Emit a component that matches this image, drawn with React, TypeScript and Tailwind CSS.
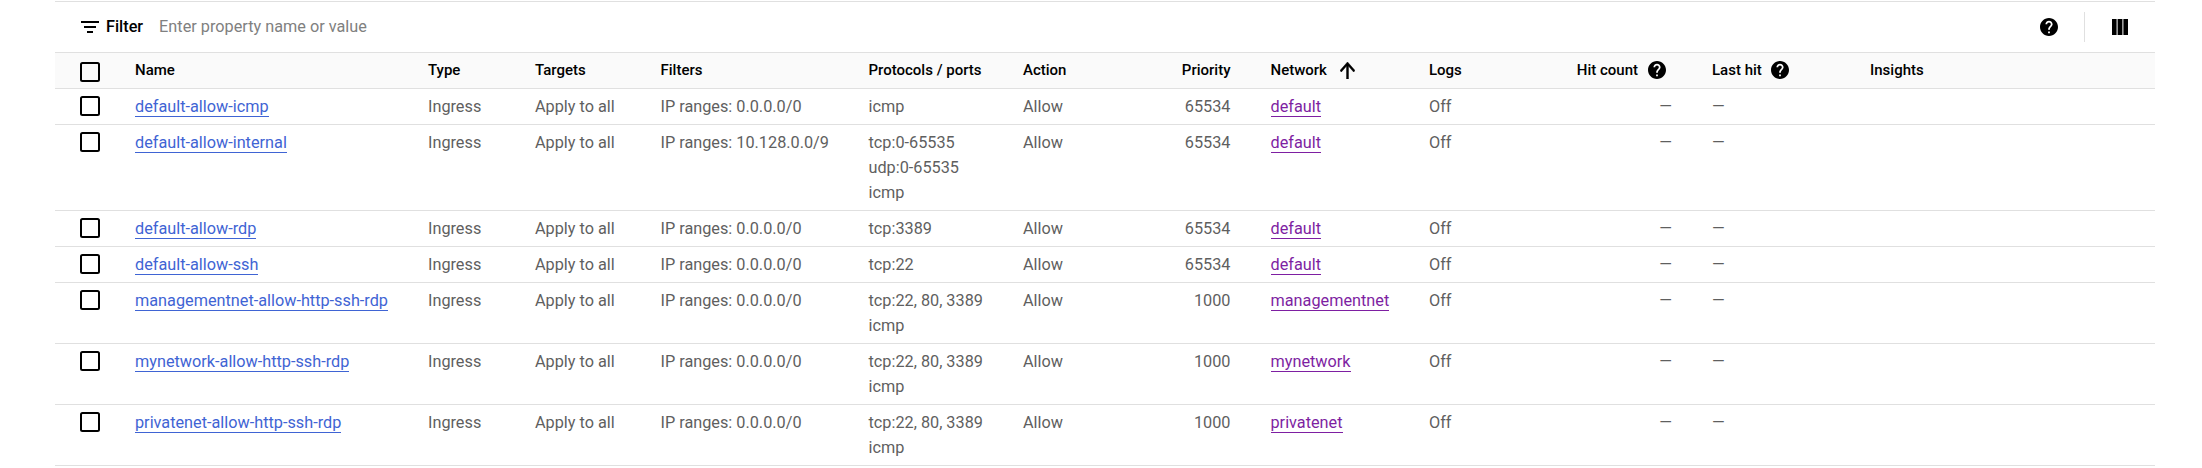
import React from "react";

type Rule = {
  name: string;
  filter: string;
  ports: string[];
  priority: string;
  network: string;
};

const rules: Rule[] = [
  { name: "default-allow-icmp", filter: "0.0.0.0/0", ports: ["icmp"], priority: "65534", network: "default" },
  { name: "default-allow-internal", filter: "10.128.0.0/9", ports: ["tcp:0-65535", "udp:0-65535", "icmp"], priority: "65534", network: "default" },
  { name: "default-allow-rdp", filter: "0.0.0.0/0", ports: ["tcp:3389"], priority: "65534", network: "default" },
  { name: "default-allow-ssh", filter: "0.0.0.0/0", ports: ["tcp:22"], priority: "65534", network: "default" },
  { name: "managementnet-allow-http-ssh-rdp", filter: "0.0.0.0/0", ports: ["tcp:22, 80, 3389", "icmp"], priority: "1000", network: "managementnet" },
  { name: "mynetwork-allow-http-ssh-rdp", filter: "0.0.0.0/0", ports: ["tcp:22, 80, 3389", "icmp"], priority: "1000", network: "mynetwork" },
  { name: "privatenet-allow-http-ssh-rdp", filter: "0.0.0.0/0", ports: ["tcp:22, 80, 3389", "icmp"], priority: "1000", network: "privatenet" },
];

const columns =
  "grid grid-cols-[80px_293px_107px_125.5px_208px_154.5px_112px_135.5px_158.5px_283px_158px_1fr]";

function HelpIcon({ className = "" }: { className?: string }) {
  return (
    <svg viewBox="2 2 20 20" className={`size-[18px] shrink-0 ${className}`} fill="currentColor">
      <path d="M12 2C6.48 2 2 6.48 2 12s4.48 10 10 10 10-4.48 10-10S17.52 2 12 2zm1 17h-2v-2h2v2zm2.07-7.75-.9.92C13.45 12.9 13 13.5 13 15h-2v-.5c0-1.1.45-2.1 1.17-2.83l1.24-1.26c.37-.36.59-.86.59-1.41 0-1.1-.9-2-2-2s-2 .9-2 2H8c0-2.21 1.79-4 4-4s4 1.79 4 4c0 .88-.36 1.68-.93 2.25z" />
    </svg>
  );
}

function ArrowUpIcon() {
  return (
    <svg viewBox="4 4 16 16" className="mb-px h-[17px] w-[15px] shrink-0" fill="currentColor" preserveAspectRatio="none">
      <path d="m4 12 1.41 1.41L11 7.83V20h2V7.83l5.58 5.59L20 12l-8-8z" stroke="currentColor" strokeWidth="0.5" />
    </svg>
  );
}

function Checkbox() {
  return <div className="size-5 rounded-[2.5px] border-2 border-black" />;
}

function Link({ children, className }: { children: React.ReactNode; className: string }) {
  return (
    <a className={`inline-block h-[23px] border-b align-top ${className}`}>{children}</a>
  );
}

export default function App() {
  return (
    <div className="h-[468px] w-[2202px] overflow-hidden bg-white pt-px pr-[47px] pl-[55px] font-[Roboto,sans-serif] text-[16.25px] leading-[25px] text-[#5f5f5f]">
      <div className="flex h-[51px] items-center border-t border-[#e0e0e0] pr-[27px] pl-[26px] text-black">
        <svg viewBox="0 0 18 12" className="h-3 w-[18px]" fill="currentColor">
          <path d="M0 0h18v2H0zM3 5h12v2H3zM6 10h6v2H6z" />
        </svg>
        <span className="mb-px ml-[7px] font-medium">Filter</span>
        <span className="mb-px ml-4 text-[#808080]">Enter property name or value</span>
        <div className="ml-auto flex items-center">
          <HelpIcon />
          <div className="ml-[26px] h-[30px] w-px bg-[#e0e0e0]" />
          <svg viewBox="0 0 16 16" className="ml-[27px] size-4" fill="currentColor">
            <path d="M0 0h4.6v16H0zM5.6 0h4.8v16H5.6zM11.4 0H16v16h-4.6z" />
          </svg>
        </div>
      </div>

      <div className={`${columns} h-9 items-start border-t border-[#e0e0e0] bg-[#fafafa] pt-[5px] text-[15px] font-medium text-black`}>
        <div className="pt-1 pl-[25px]"><Checkbox /></div>
        <div>Name</div>
        <div>Type</div>
        <div>Targets</div>
        <div>Filters</div>
        <div>Protocols / ports</div>
        <div>Action</div>
        <div className="pr-10 text-right">Priority</div>
        <div className="flex h-[25px] items-center gap-[13px]">Network<ArrowUpIcon /></div>
        <div className="flex h-[25px] items-center justify-between pr-[46px]">
          <span>Logs</span>
          <span className="flex items-center gap-[10px]">Hit count<HelpIcon className="mb-px" /></span>
        </div>
        <div className="flex h-[25px] items-center gap-[9.5px]">Last hit<HelpIcon className="mb-px" /></div>
        <div>Insights</div>
      </div>

      {rules.map((r) => (
        <div key={r.name} className={`${columns} border-t border-[#e0e0e0] py-[5px]`}>
          <div className="h-5 pt-0.5 pl-[25px]"><Checkbox /></div>
          <div><Link className="border-[#3f64d4] text-[#3f64d4]">{r.name}</Link></div>
          <div>Ingress</div>
          <div>Apply to all</div>
          <div>IP ranges: {r.filter}</div>
          <div>{r.ports.map((p) => <div key={p}>{p}</div>)}</div>
          <div>Allow</div>
          <div className="pr-10 text-right">{r.priority}</div>
          <div><Link className="border-[#7e1fa2] text-[#7e1fa2]">{r.network}</Link></div>
          <div className="flex justify-between pr-10"><span>Off</span><span>—</span></div>
          <div>—</div>
          <div />
        </div>
      ))}
      <div className="border-t border-[#e0e0e0]" />
    </div>
  );
}
